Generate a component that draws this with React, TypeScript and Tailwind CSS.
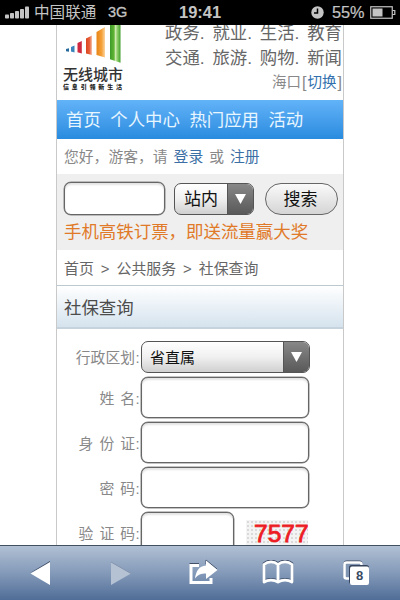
import type { ReactNode } from "react";

const links = [
  ["政务.", "就业.", "生活.", "教育"],
  ["交通.", "旅游.", "购物.", "新闻"],
];

const fields = [
  { chars: ["姓", "名"], gap: "gap-[6px]" },
  { chars: ["身", "份", "证"], gap: "gap-[6px]" },
  { chars: ["密", "码"], gap: "gap-[6px]" },
];

function StatusBar() {
  return (
    <header className="flex h-[25px] shrink-0 items-center bg-black text-[#c4c4c4]">
      <svg className="ml-[5px] shrink-0" width="24" height="13" fill="#c4c4c4">
        <rect x="0" y="8.5" width="4" height="4" rx=".8" />
        <rect x="5" y="7" width="4" height="5.5" rx=".8" />
        <rect x="10" y="5" width="4" height="7.5" rx=".8" />
        <rect x="15" y="3" width="4" height="9.5" rx=".8" />
        <rect x="20" y="0.5" width="4" height="12" rx=".8" />
      </svg>
      <span className="ml-[5px] w-[63px] pt-px text-[15.6px] leading-[24px] whitespace-nowrap">中国联通</span>
      <span className="ml-[11px] w-[21px] font-[Liberation_Sans] text-[14.5px] [-webkit-text-stroke:0.3px_#c4c4c4]">3G</span>
      <span className="ml-[50px] w-[42px] font-[Liberation_Sans] text-[16.5px] font-bold">19:41</span>
      <svg className="ml-[90px] shrink-0" width="13" height="13" viewBox="0 0 13 13">
        <circle cx="6.5" cy="6.5" r="6.2" fill="#c4c4c4" />
        <path d="M6.5 2.5V7H3" fill="none" stroke="#000" strokeWidth="1.5" />
      </svg>
      <span className="ml-[8px] w-[34px] font-[Liberation_Sans] text-[16.3px] whitespace-nowrap [-webkit-text-stroke:0.2px_#c4c4c4]">55%</span>
      <svg className="ml-[4px] shrink-0" width="26" height="13" viewBox="0 0 26 13">
        <rect x=".75" y=".75" width="21.5" height="11.5" fill="none" stroke="#c4c4c4" strokeWidth="1.2" />
        <rect x="2.5" y="2.5" width="10" height="8" fill="#c4c4c4" />
        <path d="M22.5 4.5h2.3v4h-2.3" fill="none" stroke="#c4c4c4" strokeWidth="1.2" />
      </svg>
    </header>
  );
}

function Logo() {
  return (
    <div className="ml-[5px] w-[62px] shrink-0">
      <svg width="62" height="38" viewBox="0 0 62 38">
        <defs>
          <linearGradient id="green">
            <stop offset="0" stopColor="#3d9a28" />
            <stop offset=".4" stopColor="#62b735" />
            <stop offset=".5" stopColor="#d5eeb9" />
            <stop offset=".7" stopColor="#8fce6a" />
            <stop offset="1" stopColor="#3f9e2b" />
          </linearGradient>
          <linearGradient id="orange">
            <stop offset="0" stopColor="#e88516" />
            <stop offset=".6" stopColor="#f5a13a" />
            <stop offset="1" stopColor="#fbd5a0" />
          </linearGradient>
          <linearGradient id="red">
            <stop offset="0" stopColor="#d9421d" />
            <stop offset=".6" stopColor="#e8623c" />
            <stop offset="1" stopColor="#f7c3ae" />
          </linearGradient>
        </defs>
        <path d="M4 24l3-.8v3.600l-3-.5z" fill="#276a9d" />
        <path d="M9 22l3.500-1.500v7l-3.500-1z" fill="#3b84bb" />
        <path d="M15.500 18l4.300-2v12.500l-4.300-1.200z" fill="#cf2940" />
        <path d="M24 13.500l6-3v19.500l-6-1.500z" fill="url(#red)" />
        <path d="M34.500 7l8.500-5v30.500l-8.500-2.500z" fill="url(#orange)" />
        <path d="M48 0h10.500v37.800l-10.500-3.600z" fill="url(#green)" />
      </svg>
      <div className="mt-[2px] ml-[1px] text-[15px] leading-[20px] font-medium whitespace-nowrap text-[#333]">无线城市</div>
      <div className="mt-[-2px] ml-[1px] flex h-[9px] w-[59px] items-center justify-between text-[6px] leading-[9px] font-black text-[#222]">
        {"信息引领新生活".split("").map((c) => (
          <span key={c}>{c}</span>
        ))}
      </div>
    </div>
  );
}

function Select({ children, className, arrow }: { children: ReactNode; className: string; arrow: string }) {
  return (
    <div className={`flex h-[32px] overflow-hidden rounded-[7px] border-[1.5px] border-[#555] bg-linear-to-b from-white via-[#f0f0f0] to-[#d0d0d0] ${className}`}>
      <span className="grow pt-px leading-[29px] whitespace-nowrap text-[#111]">{children}</span>
      <span className={`flex shrink-0 items-center justify-center border-l border-[#555] bg-linear-to-b from-[#888] to-[#595959] ${arrow}`}>
        <svg width="11" height="10">
          <path d="M0 0h11l-5.500 10z" fill="#fff" />
        </svg>
      </span>
    </div>
  );
}

function Box({ className }: { className: string }) {
  return <div className={`shrink-0 rounded-[7px] border-[1.5px] border-[#666] bg-white shadow-[inset_0_2px_2px_#e4e4e4,0_0_0_0.5px_#888] ${className}`} />;
}

function Label({ chars, gap }: { chars: string[]; gap: string }) {
  return (
    <div className="flex w-[83px] shrink-0 justify-end pt-[3px] text-[14.8px] text-[#888]">
      <span className={`flex ${gap}`}>
        {chars.map((c) => (
          <span key={c}>{c}</span>
        ))}
      </span>
      <span className="w-[5px] text-center">:</span>
    </div>
  );
}

function Toolbar() {
  return (
    <footer className="flex h-[55px] shrink-0 items-center border-t border-[#414f63] bg-linear-to-b from-[#b1c0d3] via-[#849ab9] to-[#506d97]">
      <svg className="ml-[30px]" width="21" height="26" viewBox="0 0 21 26">
        <path d="M0 13L20 1v3z" fill="#3d4c65" />
        <path d="M.5 13.500L20 2v23z" fill="#fff" />
      </svg>
      <svg className="ml-[60px]" width="21" height="26" viewBox="0 0 21 26">
        <path d="M0 2l20 11.500L0 25z" fill="#b5c2d4" />
        <path d="M0 2l20 11.500" stroke="#8495ad" />
      </svg>
      <svg className="ml-[56px]" width="30" height="28" viewBox="0 0 30 28">
        <path d="M11 6.500H3V23.500H23V19" fill="none" stroke="#fff" strokeWidth="3" />
        <path d="M1.500 4.500H11M18 5V1l11 9" fill="none" stroke="#435168" />
        <path d="M18 1.500L29.500 11 18 20v-5.500c-5 0-8 1-11 5C8 12 11 7 18 6.500z" fill="#fff" />
      </svg>
      <svg className="ml-[44px]" width="32" height="26" viewBox="0 0 32 26">
        <path d="M2 4.500c4-3.500 10-3.500 14 0 4-3.500 10-3.500 14 0V22c-4-2.500-10-2.500-14 0-4-2.500-10-2.500-14 0z" transform="translate(0 -1)" fill="none" stroke="#3f4e68" strokeWidth="2.500" />
        <path d="M2 4.500c4-3.500 10-3.500 14 0 4-3.500 10-3.500 14 0V22c-4-2.500-10-2.500-14 0-4-2.500-10-2.500-14 0zM16 4.500V22" fill="none" stroke="#fff" strokeWidth="2.800" strokeLinejoin="round" />
      </svg>
      <div className="relative ml-[49px] h-[26px] w-[27px]">
        <svg width="27" height="26">
          <rect x="1.500" y="1.500" width="17" height="16" rx="2" fill="none" stroke="#3d4b61" strokeWidth="2" />
          <rect x="1.500" y="2.500" width="17" height="16" rx="2" fill="#8196b2" stroke="#fff" strokeWidth="2.500" />
          <rect x="6" y="5" width="20" height="19" rx="2.500" fill="#35445c" />
          <rect x="7" y="6.500" width="19" height="18.500" rx="2" fill="#fff" />
        </svg>
        <span className="absolute top-[6px] left-[7px] w-[19px] text-center font-[Liberation_Sans] text-[13px] leading-[19px] font-bold text-[#394a63]">8</span>
      </div>
    </footer>
  );
}

export default function App() {
  return (
    <div className="flex h-[600px] w-[400px] flex-col overflow-hidden bg-white font-['Liberation_Sans','Noto_Sans_CJK_SC',sans-serif]">
      <StatusBar />

      <main className="ml-[56px] h-[520px] w-[288px] overflow-hidden border-x border-[#c9c9c9]">
        <div className="flex h-[75px] justify-between">
          <Logo />
          <div className="w-[178px] pr-px text-[17.4px] text-[#666]">
            {links.map((row, i) => (
              <div key={i} className={i === 0 ? "flex h-[21px] justify-between leading-[17px]" : "flex h-[25px] justify-between leading-[25px]"}>
                {row.map((item) => (
                  <span key={item} className={item.endsWith(".") ? "w-[47.500px] whitespace-nowrap" : "whitespace-nowrap"}>{item}</span>
                ))}
              </div>
            ))}
            <div className="flex h-[23px] items-center justify-end text-[14.5px] text-[#888]">
              海口<span className="px-px text-[16px]">[</span><span className="text-[#3170ad]">切换</span><span className="pl-px text-[16px]">]</span>
            </div>
          </div>
        </div>

        <nav className="flex h-[39px] items-center gap-[9.5px] bg-linear-to-b from-[#62b3f8] to-[#278bdf] pt-[2px] pl-[9px] text-[17.4px] whitespace-nowrap text-[#e8f6ff]">
          <span>首页</span>
          <span>个人中心</span>
          <span>热门应用</span>
          <span>活动</span>
        </nav>

        <div className="flex h-[35px] items-center gap-[6px] pt-[2px] pl-[7px] text-[14.8px] whitespace-nowrap text-[#888]">
          <span>您好，游客，请</span>
          <span className="text-[#3b6fa5]">登录</span>
          <span>或</span>
          <span className="text-[#3b6fa5]">注册</span>
        </div>

        <section className="h-[76px] bg-[#efefef] pt-[8px] pl-[7px]">
          <div className="flex h-[33px] items-end">
            <Box className="h-[33px] w-[101px]" />
            <Select className="ml-[9px] w-[80px] pl-[9px] text-[17px]" arrow="w-[26px]">站内</Select>
            <button className="ml-[11px] h-[32px] w-[73px] rounded-full border-[1.5px] border-[#666] bg-linear-to-b from-[#fafafa] to-[#d5d5d5] pr-[2px] text-[17px] leading-[29px] text-[#111]">搜索</button>
          </div>
          <p className="h-[34px] text-[17.45px] leading-[34px] whitespace-nowrap text-[#e17a28]">手机高铁订票，即送流量赢大奖</p>
        </section>

        <div className="flex h-[35px] items-center gap-[7px] pt-[3px] pl-[7px] text-[14.9px] whitespace-nowrap text-[#666]">
          <span>首页</span>
          <span>&gt;</span>
          <span>公共服务</span>
          <span>&gt;</span>
          <span>社保查询</span>
        </div>

        <h1 className="h-[44px] border-t border-b-2 border-t-[#bdc9d1] border-b-[#c6d3dd] bg-linear-to-b from-white to-[#d5e3ee] pt-px pl-[7px] text-[17.4px] leading-[42px] text-[#4c4c4c]">社保查询</h1>

        <form className="flex flex-col gap-[4px] pt-[12px]">
          <div className="flex h-[32px] items-center">
            <Label chars={["行政区划"]} gap="gap-0" />
            <Select className="ml-px w-[169px] pl-[8px] text-[15px]" arrow="w-[26px]">省直属</Select>
          </div>
          {fields.map((f, i) => (
            <div key={i} className="flex h-[41px] items-center">
              <Label chars={f.chars} gap={f.gap} />
              <Box className="ml-px h-[41px] w-[168px]" />
            </div>
          ))}
          <div className="flex h-[41px] items-center">
            <Label chars={["验", "证", "码"]} gap="gap-[6px]" />
            <Box className="ml-px h-[41px] w-[93px]" />
            <div className="ml-[12px] h-[25px] w-[62px] bg-[#f4f4f4] bg-[radial-gradient(#dadada_1px,transparent_1px)] bg-[size:4px_4px] pl-[8px] text-[24.5px] leading-[27px] text-[#ed1c24] [-webkit-text-stroke:0.8px_#ed1c24]">7577</div>
          </div>
        </form>
      </main>

      <Toolbar />
    </div>
  );
}
